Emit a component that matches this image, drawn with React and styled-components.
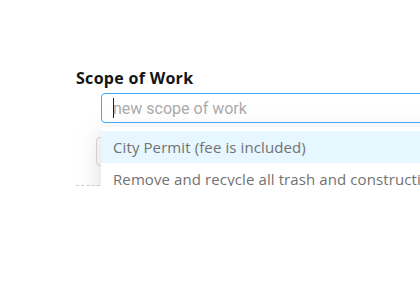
import React from "react";
import styled, { createGlobalStyle } from "styled-components";

const Global = createGlobalStyle`
  html, body { margin: 0; padding: 0; background: #fff; overflow: hidden; }
  body { font-family: "Open Sans", "Liberation Sans", sans-serif; }
`;

const Page = styled.div`
  height: 186px;
  width: 420px;
  overflow: clip;
`;

const Section = styled.div`
  padding: 67px 0 0 76px;
`;

const Title = styled.div`
  font-family: "Open Sans", sans-serif;
  font-weight: 700;
  font-size: 16px;
  line-height: 22px;
  color: #141414;
  letter-spacing: 0.3px;
`;

const Field = styled.div`
  position: relative;
  margin: 4px 0 0 25px;
  width: 340px;
`;

const Input = styled.input`
  box-sizing: border-box;
  display: block;
  width: 100%;
  height: 30px;
  padding: 0 11px;
  border: 1px solid #40a9ff;
  border-radius: 4px;
  outline: none;
  font-family: Roboto, sans-serif;
  font-size: 16px;
  color: #333;
  caret-color: transparent;
  &::placeholder { color: #ababab; }
`;

const Caret = styled.span`
  position: absolute;
  left: 12px;
  top: 5px;
  width: 1px;
  height: 20px;
  background: #222;
  pointer-events: none;
`;

const Dropdown = styled.div`
  position: absolute;
  z-index: 2;
  top: 34px;
  left: 0;
  width: 100%;
  padding: 4px 0;
  background: #fff;
  border-radius: 2px;
  box-shadow: 0 3px 6px -4px rgba(0,0,0,.12), 0 6px 16px 0 rgba(0,0,0,.08), 0 9px 28px 8px rgba(0,0,0,.05);
`;

const Option = styled.div`
  height: 32px;
  display: flex;
  align-items: center;
  padding: 0 12px;
  white-space: nowrap;
  font-family: "Open Sans", sans-serif;
  font-size: 15px;
  letter-spacing: 0.1px;
  color: #727272;
  background: ${(p) => (p.$active ? "#e6f7ff" : "transparent")};
`;

const BehindBox = styled.div`
  box-sizing: border-box;
  margin: 14px 0 0 20px;
  width: 300px;
  height: 29px;
  border: 1px solid #d9d9d9;
  border-radius: 4px;
`;

const Divider = styled.div`
  margin: 19px 0 0 0;
  width: 60px;
  border-top: 1px dashed #d0d0d0;
`;

export default function App() {
  return (
    <Page>
      <Global />
      <Section>
        <Title>Scope of Work</Title>
        <Field>
          <Input placeholder="new scope of work" />
          <Caret />
          <Dropdown>
            <Option $active>City Permit (fee is included)</Option>
            <Option>Remove and recycle all trash and construction debris</Option>
          </Dropdown>
        </Field>
        <BehindBox />
        <Divider />
      </Section>
    </Page>
  );
}
